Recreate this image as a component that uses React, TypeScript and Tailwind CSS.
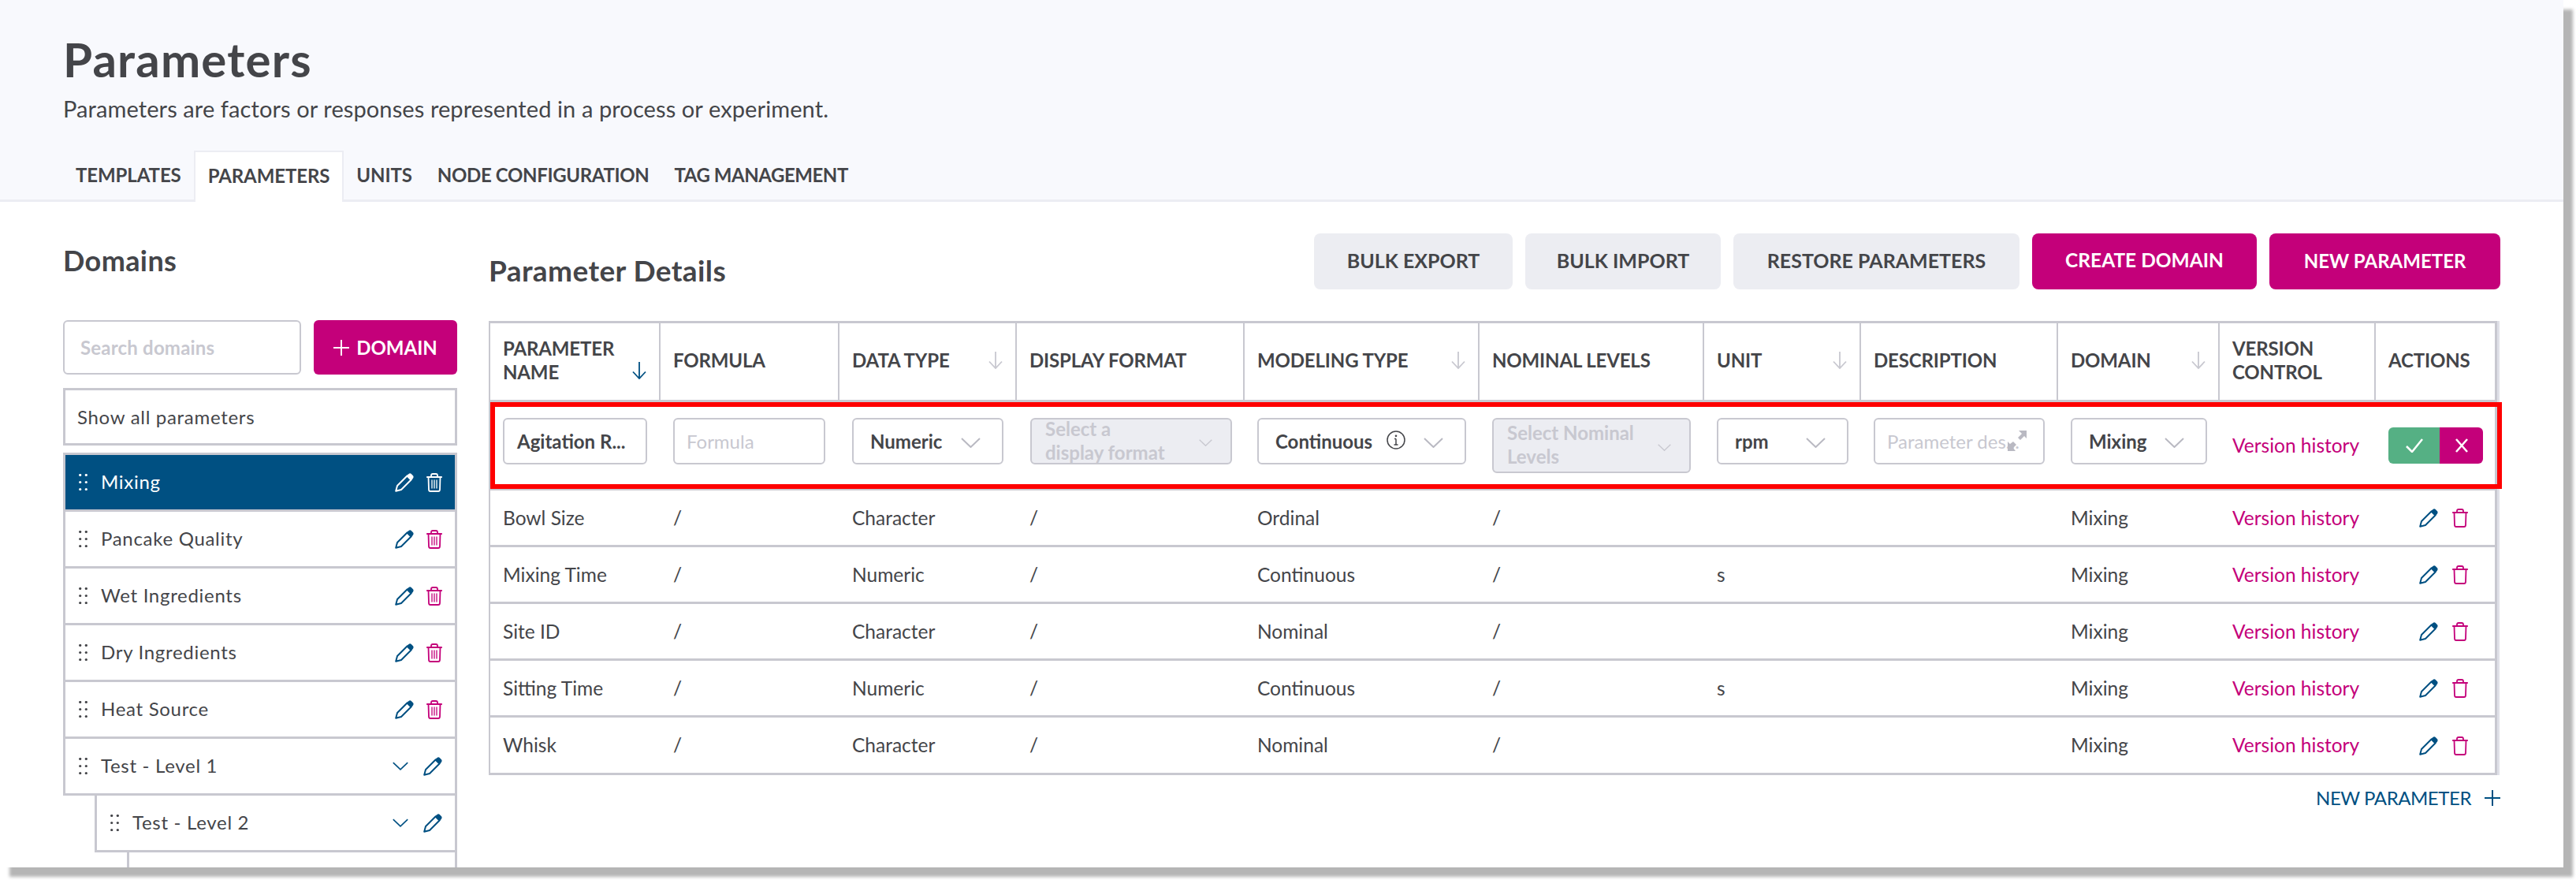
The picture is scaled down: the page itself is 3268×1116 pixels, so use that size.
import { ReactNode } from 'react';

const cols = 'grid grid-cols-[216px_227px_225px_289px_298px_285px_199px_250px_205px_198px_151px]';
const cell = 'border-r-2 border-[#c8c8d0] pl-4 flex items-center last:border-r-0';
const box = 'rounded-[6px] border-[2.5px] border-[#c8c8d0] h-[59px] flex items-center font-bold text-[24px]';

function Pencil({ color = '#005082', className = '' }: { color?: string; className?: string }) {
  return (
    <svg viewBox="0 0 24 24" className={`w-6 h-6 shrink-0 ${className}`}>
      <path d="M1.2 22.8 L3 16 L15.5 3.5 L20.5 8.5 L8 21 Z" fill="none" stroke={color} strokeWidth="2" strokeLinejoin="round" />
      <path d="M15 3 L17.5 0.9 Q19.3 -0.2 20.8 1 L23 3.2 Q24.2 4.8 23 6.4 L21 9 Z" fill={color} />
    </svg>
  );
}

function Trash({ color = '#c4007a', lines = false }: { color?: string; lines?: boolean }) {
  return (
    <svg viewBox="0 0 20 24" className="w-5 h-6 shrink-0" fill="none" stroke={color} strokeWidth="1.8" strokeLinecap="round">
      <path d="M0.8 5 H19.2" />
      <path d="M6 5 V3 Q6 1 8 1 H12 Q14 1 14 3 V5" />
      <path d="M2.5 5 L3 21 Q3.1 23 5 23 H15 Q16.9 23 17 21 L17.5 5" />
      {lines && <path d="M7 9 V19 M10 9 V19 M13 9 V19" strokeWidth="1.3" />}
    </svg>
  );
}

function Dots({ color = '#444549' }: { color?: string }) {
  return (
    <svg viewBox="0 0 11 21" className="w-[11px] h-[21px] shrink-0" fill={color}>
      {[1.5, 10.5, 19.5].map(y => (
        <g key={y}>
          <circle cx="1.7" cy={y} r="1.6" />
          <circle cx="9.3" cy={y} r="1.6" />
        </g>
      ))}
    </svg>
  );
}

function Chevron({ className = 'w-[25px] h-[13px] mt-1', color = '#b9b9c2' }: { className?: string; color?: string }) {
  return (
    <svg viewBox="0 0 25 13" className={`shrink-0 ${className}`} fill="none" stroke={color} strokeWidth="2">
      <path d="M1 1 L12.5 12 L24 1" />
    </svg>
  );
}

function SortArrow({ color = '#c8c8d0', className = '' }: { color?: string; className?: string }) {
  return (
    <svg viewBox="0 0 18 22" className={`w-[18px] h-[22px] shrink-0 ${className}`} fill="none" stroke={color} strokeWidth="1.8">
      <path d="M9 0 V21 M1 12.5 L9 21 L17 12.5" />
    </svg>
  );
}

function Plus({ color = '#fff', className = 'w-5 h-5' }: { color?: string; className?: string }) {
  return (
    <svg viewBox="0 0 20 20" className={`shrink-0 ${className}`} stroke={color} strokeWidth="2">
      <path d="M10 0 V20 M0 10 H20" />
    </svg>
  );
}

function DomainRow({ name, active, nested, indent = '' }: { name: string; active?: boolean; nested?: boolean; indent?: string }) {
  return (
    <div className={`h-[72px] border-x-[3px] border-b-[3px] border-[#c8c8d0] flex items-center pl-[17px] pr-[16px] text-[24px] tracking-[0.7px] ${indent} ${active ? 'bg-[#005082] text-white' : 'text-[#444549]'}`}>
      <Dots color={active ? '#fff' : '#444549'} />
      <span className="ml-[17px] flex-1 pb-[2px]">{name}</span>
      {nested ? (
        <div className="flex items-center gap-[19px]">
          <Chevron className="w-5 h-[11px]" color="#005082" />
          <Pencil />
        </div>
      ) : (
        <div className="flex items-center gap-[16px]">
          <Pencil color={active ? '#fff' : '#005082'} />
          <Trash color={active ? '#fff' : '#c4007a'} lines />
        </div>
      )}
    </div>
  );
}

function HeaderCell({ children, sort, active }: { children: ReactNode; sort?: boolean; active?: boolean }) {
  return (
    <div className={`${cell} justify-between pr-4 text-[24px] leading-[30px] font-bold text-[#444549] tracking-[-0.15px]`}>
      <span className="pb-[3px]">{children}</span>
      {sort && <SortArrow color={active ? '#005082' : '#c8c8d0'} className={active ? 'mt-[22px]' : 'mb-[3px]'} />}
    </div>
  );
}

function Select({ w, children, extra }: { w: string; children: ReactNode; extra?: ReactNode }) {
  return (
    <div className={`${box} ${w} pl-[21px] pr-[27px] text-[#444549]`}>
      <span className="flex-1">{children}</span>
      {extra}
      <Chevron />
    </div>
  );
}

function DisabledSelect({ w, h, lines }: { w: string; h: string; lines: string[] }) {
  return (
    <div className={`rounded-[6px] border-[2.5px] border-[#c8c8d0] bg-[#ecedf2] flex items-center pl-[17px] pr-[23px] text-[24px] leading-[30px] font-bold text-[#c8c8d0] ${w} ${h}`}>
      <span className="flex-1 pb-[2px]">
        {lines.map(l => (
          <span key={l} className="block">{l}</span>
        ))}
      </span>
      <Chevron className="w-[17px] h-[9px] mt-1" color="#c8c8d0" />
    </div>
  );
}

const rows = [
  ['Bowl Size', 'Character', 'Ordinal', ''],
  ['Mixing Time', 'Numeric', 'Continuous', 's'],
  ['Site ID', 'Character', 'Nominal', ''],
  ['Sitting Time', 'Numeric', 'Continuous', 's'],
  ['Whisk', 'Character', 'Nominal', ''],
];

const tab = 'px-[16px] h-[65px] pb-[3px] flex items-center';

export default function App() {
  return (
    <div className="w-[3268px] h-[1116px] bg-white overflow-hidden [font-family:Lato,sans-serif]">
      <div className="w-[3252px] h-[1100px] bg-white shadow-[12px_12px_4px_#b5b5b5] overflow-hidden">
        <div className="h-[256px] bg-[#f8f9fd] border-b-[3px] border-[#ecedf3] flex flex-col">
          <h1 className="pl-[80px] pt-[39px] text-[60px] leading-[72px] font-bold text-[#444549] tracking-[1.2px]">Parameters</h1>
          <p className="pl-[80px] mt-[9px] text-[29px] leading-[36px] text-[#444549] tracking-[0.1px]">Parameters are factors or responses represented in a process or experiment.</p>
          <div className="mt-auto pl-[80px] flex items-end h-[63px] text-[24px] font-bold text-[#444549] tracking-[-0.1px] -mb-[3px]">
            <div className={tab}>TEMPLATES</div>
            <div className={`${tab} bg-white border-x-2 border-t-2 border-[#ecedf3]`}>PARAMETERS</div>
            <div className={tab}>UNITS</div>
            <div className={`${tab} tracking-[-0.35px]`}>NODE CONFIGURATION</div>
            <div className={`${tab} tracking-[-0.45px]`}>TAG MANAGEMENT</div>
          </div>
        </div>

        <div className="flex pl-[80px] gap-[40px]">
          <div className="w-[500px] shrink-0">
            <h2 className="h-[150px] pt-[52px] text-[36px] leading-[44px] font-bold text-[#444549] tracking-[0.4px]">Domains</h2>
            <div className="flex gap-4 h-[69px]">
              <input placeholder="Search domains" className="w-[302px] rounded-[6px] border-[2.5px] border-[#c8c8d0] pl-[20px] text-[24px] tracking-[0.2px] font-bold outline-none placeholder:text-[#c8c8d0]" />
              <button className="w-[182px] rounded-[6px] bg-[#c4007a] text-white text-[24px] font-bold flex items-center justify-center gap-[9px]">
                <Plus />
                DOMAIN
              </button>
            </div>
            <div className="mt-[17px] h-[73px] border-[3px] border-[#c8c8d0] flex items-center pl-[15px] text-[24px] tracking-[0.7px] text-[#444549]">Show all parameters</div>
            <div className="mt-[9px] border-t-[3px] border-[#c8c8d0]">
              <DomainRow name="Mixing" active />
              <DomainRow name="Pancake Quality" />
              <DomainRow name="Wet Ingredients" />
              <DomainRow name="Dry Ingredients" />
              <DomainRow name="Heat Source" />
              <DomainRow name="Test - Level 1" nested />
              <DomainRow name="Test - Level 2" nested indent="ml-[40px]" />
              <div className="h-[72px] ml-[81px] border-x-[3px] border-[#c8c8d0]" />
            </div>
          </div>

          <div className="w-[2552px] shrink-0">
            <div className="mt-[40px] h-[71px] flex items-start">
              <h2 className="pt-[25px] flex-1 text-[37px] leading-[44px] font-bold text-[#444549] tracking-[0.4px]">Parameter Details</h2>
              <div className="flex gap-4 font-bold">
                <button className="w-[252px] h-[71px] pb-[2px] rounded-[8px] bg-[#ecedf2] text-[#444549] text-[25px]">BULK EXPORT</button>
                <button className="w-[248px] h-[71px] pb-[2px] rounded-[8px] bg-[#ecedf2] text-[#444549] text-[25px]">BULK IMPORT</button>
                <button className="w-[363px] h-[71px] pb-[2px] rounded-[8px] bg-[#ecedf2] text-[#444549] text-[25px]">RESTORE PARAMETERS</button>
                <button className="w-[285px] h-[71px] pb-[2px] rounded-[8px] bg-[#c4007a] text-white text-[24.5px]">CREATE DOMAIN</button>
                <button className="w-[293px] h-[71px] pb-[2px] rounded-[8px] bg-[#c4007a] text-white text-[24px]">NEW PARAMETER</button>
              </div>
            </div>

            <div className="mt-[40px] w-[2548px] border-[3px] border-l-2 border-[#c8c8d0] shadow-[3px_0_0_#dfe0e8]">
              <div className={`${cols} h-[100px] border-b-[3px] border-[#c8c8d0]`}>
                <HeaderCell sort active>PARAMETER<br />NAME</HeaderCell>
                <HeaderCell>FORMULA</HeaderCell>
                <HeaderCell sort>DATA TYPE</HeaderCell>
                <HeaderCell>DISPLAY FORMAT</HeaderCell>
                <HeaderCell sort>MODELING TYPE</HeaderCell>
                <HeaderCell>NOMINAL LEVELS</HeaderCell>
                <HeaderCell sort>UNIT</HeaderCell>
                <HeaderCell>DESCRIPTION</HeaderCell>
                <HeaderCell sort>DOMAIN</HeaderCell>
                <HeaderCell>VERSION<br />CONTROL</HeaderCell>
                <HeaderCell>ACTIONS</HeaderCell>
              </div>

              <div className={`${cols} relative h-[112px] border-b-2 border-[#c8c8d0]`}>
                <div className="pl-4 pt-5">
                  <div className={`${box} w-[183px] pl-[16px] text-[#444549]`}>Agitation R...</div>
                </div>
                <div className="pl-4 pt-5">
                  <div className={`${box} w-[193px] pl-[15px] font-normal text-[#c8c8d0]`}>Formula</div>
                </div>
                <div className="pl-4 pt-5">
                  <Select w="w-[192px]">Numeric</Select>
                </div>
                <div className="pl-[17px] pt-5">
                  <DisabledSelect w="w-[256px]" h="h-[59px]" lines={['Select a', 'display format']} />
                </div>
                <div className="pl-4 pt-5">
                  <Select
                    w="w-[265px]"
                    extra={
                      <svg viewBox="0 0 24 24" className="w-6 h-6 mr-[23px] -mt-1" fill="none" stroke="#444549" strokeWidth="1.5">
                        <circle cx="12" cy="12" r="11" />
                        <path d="M12 10.5 V18 M9.5 18 H14.5 M10 10.5 H12" />
                        <circle cx="12" cy="6.8" r="0.6" fill="#444549" />
                      </svg>
                    }
                  >
                    Continuous
                  </Select>
                </div>
                <div className="pl-4 pt-5">
                  <DisabledSelect w="w-[252px]" h="h-[70px]" lines={['Select Nominal', 'Levels']} />
                </div>
                <div className="pl-4 pt-5">
                  <Select w="w-[167px]">rpm</Select>
                </div>
                <div className="pl-4 pt-5">
                  <div className={`${box} w-[217px] pl-[15px] font-normal text-[#c8c8d0] relative overflow-hidden`}>
                    <span className="whitespace-nowrap">Parameter des...</span>
                    <svg viewBox="0 0 28 28" className="absolute right-[17px] top-[14px] w-[28px] h-[28px]" fill="#b9b9c2">
                      <path d="M14 0 H24 V10 L21 7 L16 12 L13 9 L18 4 Z" />
                      <path d="M0 14 L3 17 L7 14 L11 18 L7 22 L10 26 H0 Z" />
                    </svg>
                  </div>
                </div>
                <div className="pl-4 pt-5">
                  <Select w="w-[173px]">Mixing</Select>
                </div>
                <div className="pl-4 flex items-center text-[24.5px] text-[#c4007a]">Version history</div>
                <div className="pl-4 flex items-center">
                  <div className="flex h-[46px] w-[120px] rounded-[6px] overflow-hidden">
                    <button className="w-[65px] bg-[#55b084] flex items-center justify-center">
                      <svg viewBox="0 0 22 18" className="w-[22px] h-[18px]" fill="none" stroke="#fff" strokeWidth="2.5">
                        <path d="M1 10 L8 17 L21 1" />
                      </svg>
                    </button>
                    <button className="flex-1 bg-[#c4007a] flex items-center justify-center">
                      <svg viewBox="0 0 16 18" className="w-4 h-[18px]" fill="none" stroke="#fff" strokeWidth="2.5">
                        <path d="M1 1 L15 17 M15 1 L1 17" />
                      </svg>
                    </button>
                  </div>
                </div>
                <div className="absolute top-0 left-0 -right-[9px] h-[110px] border-[6px] border-[#ff0000] pointer-events-none" />
              </div>

              {rows.map(([name, type, model, unit], i) => (
                <div key={name} className={`${cols} text-[24.5px] text-[#444549] items-center pt-px ${i < rows.length - 1 ? 'h-[72px] border-b-[3px] border-[#c8c8d0]' : 'h-[70px]'}`}>
                  <span className="pl-4">{name}</span>
                  <span className="pl-4">/</span>
                  <span className="pl-4">{type}</span>
                  <span className="pl-4">/</span>
                  <span className="pl-4">{model}</span>
                  <span className="pl-4">/</span>
                  <span className="pl-4">{unit}</span>
                  <span />
                  <span className="pl-4">Mixing</span>
                  <span className="pl-4 text-[#c4007a]">Version history</span>
                  <span className="pl-[55px] flex items-center gap-[18px]">
                    <Pencil />
                    <Trash />
                  </span>
                </div>
              ))}
            </div>

            <div className="mt-[11px] flex items-center justify-end gap-[17px] text-[24px] tracking-[-0.45px] text-[#005082]">
              NEW PARAMETER
              <Plus color="#005082" />
            </div>
          </div>
        </div>
      </div>
    </div>
  );
}
